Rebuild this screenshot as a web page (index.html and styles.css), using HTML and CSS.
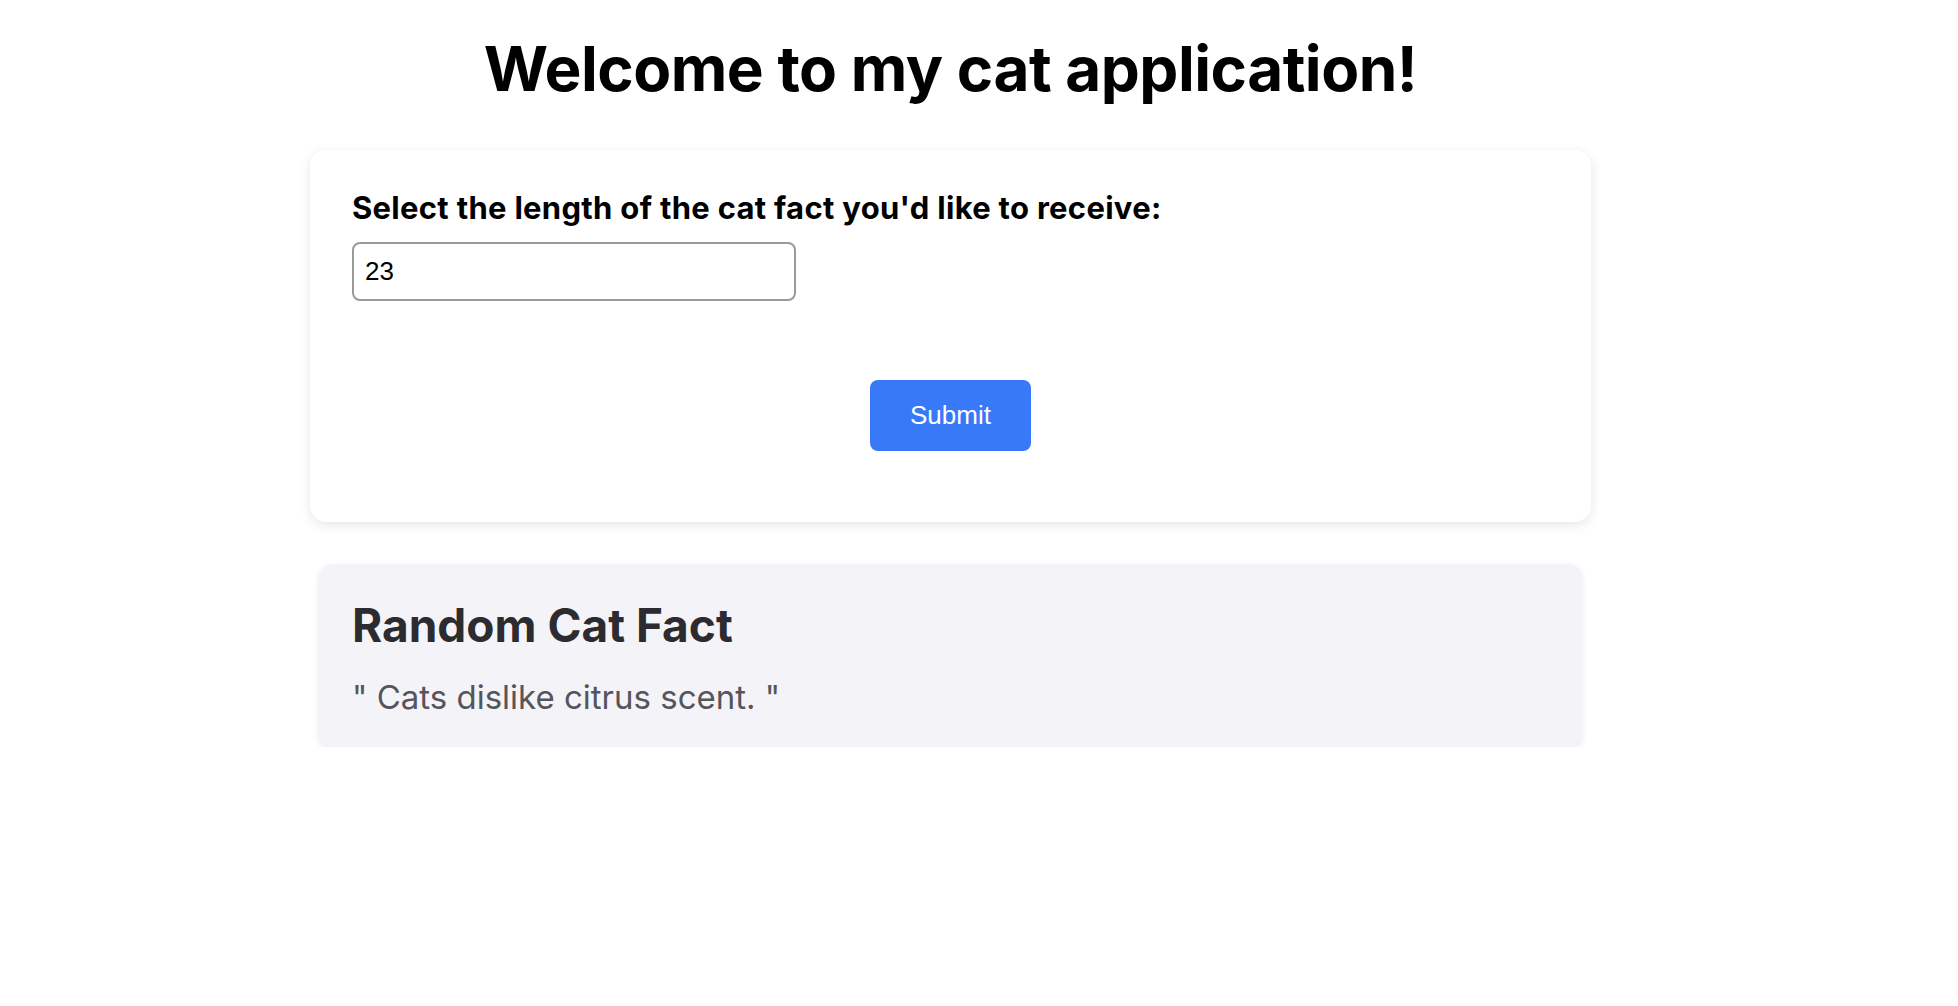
FILE: index.html
```html
<!DOCTYPE html>
<html lang="en">
<head>
<meta charset="utf-8">
<title>Cat App</title>
<link rel="stylesheet" href="styles.css">
</head>
<body>
<div class="page">
  <h1 class="title">Welcome to my cat application!</h1>
  <form class="form-card">
    <label class="form-label" for="len">Select the length of the cat fact you'd like to receive:</label>
    <input class="form-input" id="len" type="text" value="23">
    <div class="form-actions">
      <button class="submit-btn" type="button">Submit</button>
    </div>
  </form>
  <section class="fact-card">
    <h2 class="fact-title">Random Cat Fact</h2>
    <p class="fact-text">" Cats dislike citrus scent. "</p>
  </section>
</div>
</body>
</html>
```

FILE: styles.css
```css
html, body {
  margin: 0;
  padding: 0;
  background: #ffffff;
}

body {
  font-family: Inter, "Noto Sans", sans-serif;
  color: #000;
}

.page {
  width: 1281px;
  margin-left: 310px;
  padding-top: 31px;
}

.title {
  margin: 0 0 44px;
  text-align: center;
  font-size: 62px;
  line-height: 75px;
  font-weight: 700;
  letter-spacing: -0.5px;
  color: #000;
}

.form-card {
  display: flex;
  flex-direction: column;
  align-items: flex-start;
  padding: 40px 42px 71px;
  background: #fff;
  border-radius: 16px;
  box-shadow: 0 3px 12px rgba(0, 0, 0, 0.10);
}

.form-label {
  font-size: 31px;
  line-height: 36px;
  font-weight: 700;
  letter-spacing: 0.3px;
  color: #000;
}

.form-input {
  box-sizing: border-box;
  margin-top: 16px;
  width: 444px;
  height: 59px;
  padding: 0 11px;
  border: 2px solid #9a9a9a;
  border-radius: 8px;
  font-family: "Liberation Sans", Arial, sans-serif;
  font-size: 26px;
  color: #000;
  background: #fff;
  outline: none;
}

.form-actions {
  align-self: stretch;
  display: flex;
  justify-content: center;
  margin-top: 79px;
}

.submit-btn {
  width: 161px;
  height: 71px;
  border: none;
  border-radius: 8px;
  background: #3779f6;
  color: #fff;
  font-family: "Liberation Sans", Arial, sans-serif;
  font-size: 26px;
  cursor: pointer;
}

.fact-card {
  margin: 42px 9px 0;
  padding: 34px 32px 30px 33px;
  background: #f4f4f8;
  border-radius: 14px;
  box-shadow: 0 3px 7px rgba(0, 0, 0, 0.09);
}

.fact-title {
  margin: 0;
  font-size: 46px;
  line-height: 54px;
  font-weight: 700;
  color: #2c2c30;
}

.fact-text {
  margin: 25px 0 0;
  font-size: 33px;
  line-height: 40px;
  color: #55555b;
}
```
